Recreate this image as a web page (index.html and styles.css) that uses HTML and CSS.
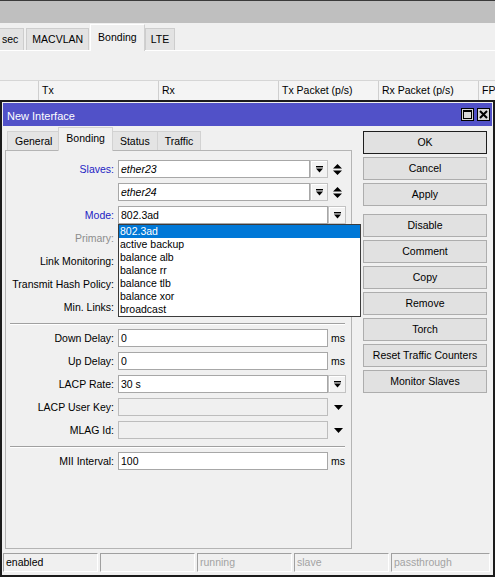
FILE: index.html
```html
<!DOCTYPE html>
<html lang="en">
<head>
  <meta charset="UTF-8" />
  <title>Interface List</title>
  <meta name="viewport" content="width=device-width, initial-scale=1.0" />
  <link rel="stylesheet" href="styles.css">
</head>
<body>

  <div class="top-strip"></div>

  <div class="main-tabs">
    <span class="mtab first">sec</span>
    <span class="mtab">MACVLAN</span>
    <span class="mtab active">Bonding</span>
    <span class="mtab">LTE</span>
  </div>

  <div class="toolbar"></div>

  <div class="list-head">
    <span class="col c0"></span>
    <span class="col c1">Tx</span>
    <span class="col c1">Rx</span>
    <span class="col c2">Tx Packet (p/s)</span>
    <span class="col c2">Rx Packet (p/s)</span>
    <span class="col c3">FP</span>
  </div>

  <div class="window">
    <div class="titlebar">
      <span class="title">New Interface</span>
      <span class="tb-btns">
        <span class="tb-btn">
          <svg width="9" height="9" viewBox="0 0 9 9"><rect x="0.5" y="0.5" width="8" height="8" fill="none" stroke="#000"/><rect x="0" y="0" width="9" height="2" fill="#000"/></svg>
        </span>
        <span class="tb-btn">
          <svg width="9" height="9" viewBox="0 0 9 9"><path d="M1 1L8 8M8 1L1 8" stroke="#000" stroke-width="2"/></svg>
        </span>
      </span>
    </div>

    <div class="win-body">
      <div class="tabs-area">
        <div class="tabs">
          <span class="tab">General</span>
          <span class="tab active">Bonding</span>
          <span class="tab">Status</span>
          <span class="tab">Traffic</span>
        </div>

        <div class="panel">
          <div class="row">
            <span class="lbl link">Slaves:</span>
            <span class="field short"><span class="val it">ether23</span></span>
            <span class="dd-btn"><svg width="7" height="7" viewBox="0 0 7 7"><rect x="0" y="0" width="7" height="1.4"/><path d="M0 2.6H7L3.5 6.6Z"/></svg></span>
            <span class="updown"><svg width="9" height="11" viewBox="0 0 9 11"><path d="M4.5 0L9 4.5H0ZM0 6.5H9L4.5 11Z"/></svg></span>
          </div>
          <div class="row">
            <span class="lbl"></span>
            <span class="field short"><span class="val it">ether24</span></span>
            <span class="dd-btn"><svg width="7" height="7" viewBox="0 0 7 7"><rect x="0" y="0" width="7" height="1.4"/><path d="M0 2.6H7L3.5 6.6Z"/></svg></span>
            <span class="updown"><svg width="9" height="11" viewBox="0 0 9 11"><path d="M4.5 0L9 4.5H0ZM0 6.5H9L4.5 11Z"/></svg></span>
          </div>
          <div class="row">
            <span class="lbl link">Mode:</span>
            <span class="field long has-list">
              <span class="val">802.3ad</span>
              <ul class="droplist">
                <li class="sel">802.3ad</li>
                <li>active backup</li>
                <li>balance alb</li>
                <li>balance rr</li>
                <li>balance tlb</li>
                <li>balance xor</li>
                <li>broadcast</li>
              </ul>
            </span>
            <span class="dd-btn"><svg width="7" height="7" viewBox="0 0 7 7"><rect x="0" y="0" width="7" height="1.4"/><path d="M0 2.6H7L3.5 6.6Z"/></svg></span>
          </div>
          <div class="row"><span class="lbl off">Primary:</span></div>
          <div class="row"><span class="lbl">Link Monitoring:</span></div>
          <div class="row"><span class="lbl">Transmit Hash Policy:</span></div>
          <div class="row"><span class="lbl">Min. Links:</span></div>

          <div class="sep"></div>

          <div class="row">
            <span class="lbl">Down Delay:</span>
            <span class="field long"><span class="val">0</span></span>
            <span class="unit">ms</span>
          </div>
          <div class="row">
            <span class="lbl">Up Delay:</span>
            <span class="field long"><span class="val">0</span></span>
            <span class="unit">ms</span>
          </div>
          <div class="row">
            <span class="lbl">LACP Rate:</span>
            <span class="field long"><span class="val">30 s</span></span>
            <span class="dd-btn"><svg width="7" height="7" viewBox="0 0 7 7"><rect x="0" y="0" width="7" height="1.4"/><path d="M0 2.6H7L3.5 6.6Z"/></svg></span>
          </div>
          <div class="row">
            <span class="lbl">LACP User Key:</span>
            <span class="field long disabled"></span>
            <span class="arrow"><svg width="9" height="5" viewBox="0 0 9 5"><path d="M0 0H9L4.5 5Z"/></svg></span>
          </div>
          <div class="row">
            <span class="lbl">MLAG Id:</span>
            <span class="field long disabled"></span>
            <span class="arrow"><svg width="9" height="5" viewBox="0 0 9 5"><path d="M0 0H9L4.5 5Z"/></svg></span>
          </div>

          <div class="sep"></div>

          <div class="row">
            <span class="lbl">MII Interval:</span>
            <span class="field long"><span class="val">100</span></span>
            <span class="unit">ms</span>
          </div>
        </div>
      </div>

      <div class="buttons">
        <span class="btn default">OK</span>
        <span class="btn">Cancel</span>
        <span class="btn">Apply</span>
        <span class="btn spaced">Disable</span>
        <span class="btn">Comment</span>
        <span class="btn">Copy</span>
        <span class="btn">Remove</span>
        <span class="btn">Torch</span>
        <span class="btn">Reset Traffic Counters</span>
        <span class="btn">Monitor Slaves</span>
      </div>
    </div>

    <div class="statusbar">
      <span class="cell">enabled</span>
      <span class="cell"></span>
      <span class="cell dim">running</span>
      <span class="cell dim">slave</span>
      <span class="cell dim last">passthrough</span>
    </div>
  </div>

</body>
</html>
```

FILE: styles.css
```css
* {
  box-sizing: border-box;
}

body {
  margin: 0;
  width: 495px;
  height: 577px;
  overflow: hidden;
  background: #f0f0f0;
  font-family: "Liberation Sans", Arial, sans-serif;
  font-size: 10.5px;
  color: #000;
}

/* app chrome behind the dialog */
.top-strip {
  height: 23px;
  background: #bfbfbf;
  border-top: 1px solid #3a3a3a;
}

.main-tabs {
  height: 28px;
  display: flex;
  align-items: flex-end;
  margin-left: -7px;
  border-bottom: 1px solid #fff;
}

.mtab {
  height: 22px;
  line-height: 21px;
  padding: 0 5px;
  background: #e3e3e3;
  border: 1px solid #cdcdcd;
  border-bottom: none;
  margin-right: 2px;
}

.mtab.first {
  padding-left: 8px;
}

.mtab.active {
  height: 27px;
  line-height: 24px;
  padding: 0 7px;
  margin: 0 0 -1px -1px;
  background: #f0f0f0;
  border-color: #fff #d0d0d0 #f0f0f0 #fff;
  position: relative;
}

.toolbar {
  height: 29px;
}

.list-head {
  height: 20px;
  display: flex;
  border-top: 1px solid #d6d6d6;
  background: #f4f4f4;
}

.col {
  flex-shrink: 0;
  line-height: 19px;
  padding-left: 3px;
  border-right: 1px solid #cfcfcf;
  white-space: nowrap;
}

.c0 { width: 39px; }
.c1 { width: 120px; }
.c2 { width: 100px; }
.c3 { width: 30px; border-right: none; }

/* dialog window */
.window {
  height: 477px;
  border: 2px solid #1b1b1b;
  padding: 1px;
  background: #f0f0f0;
  display: flex;
  flex-direction: column;
}

.titlebar {
  height: 23px;
  background: #5151c8;
  color: #fff;
  font-size: 11px;
  display: flex;
  align-items: center;
  justify-content: space-between;
  padding: 2px 2px 0 4px;
}

.tb-btns {
  display: flex;
  gap: 3px;
  margin-top: -2px;
}

.tb-btn {
  width: 13px;
  height: 13px;
  border: 1px solid #000;
  background: #d8d8d8;
  display: flex;
  align-items: center;
  justify-content: center;
}

.win-body {
  display: flex;
  padding: 1px 0 0 2px;
}

.tabs-area {
  width: 347px;
}

.tabs {
  height: 23px;
  display: flex;
  align-items: flex-end;
  padding-left: 2px;
}

.tab {
  height: 19px;
  line-height: 18px;
  padding: 0 7px;
  background: #e4e4e4;
  border: 1px solid #d2d2d2;
  border-bottom: none;
  margin-right: -1px;
}

.tab.active {
  height: 24px;
  line-height: 20px;
  padding: 0 7px;
  margin: 0 -1px -1px -1px;
  background: #f0f0f0;
  border-color: #d2d2d2;
  position: relative;
  z-index: 1;
}

.panel {
  height: 399px;
  border: 1px solid #b4b4b4;
  padding-top: 9px;
  display: flex;
  flex-direction: column;
  position: relative;
}

.row {
  display: flex;
  align-items: center;
  flex-shrink: 0;
  height: 18px;
  margin-bottom: 5px;
}

.lbl {
  width: 109px;
  text-align: right;
  padding-right: 1px;
  margin-right: 3px;
  white-space: nowrap;
  line-height: 18px;
}

.lbl.link { color: #2323c4; }
.lbl.off { color: #8d8d8d; }

.field {
  height: 18px;
  background: #fff;
  border: 1px solid #a7a7a7;
  display: flex;
  align-items: center;
  padding-left: 2px;
}

.field.short { width: 192px; }
.field.long { width: 210px; }

.field.disabled {
  background: #f0f0f0;
  border-color: #bdbdbd;
}

.val.it { font-style: italic; }

.dd-btn {
  width: 18px;
  height: 18px;
  border: 1px solid #c3c3c3;
  background: #f3f3f3;
  box-shadow: inset 1px 1px 0 #fff;
  display: flex;
  align-items: center;
  justify-content: center;
}

.updown {
  margin-left: 5px;
  display: flex;
}

.arrow {
  margin-left: 6px;
  display: flex;
}

.unit {
  margin-left: 3px;
}

.sep {
  flex-shrink: 0;
  margin: 2px 6px 4px 4px;
  border-top: 1px solid #a0a0a0;
  border-bottom: 1px solid #fff;
}

/* open combo list of the Mode field */
.has-list {
  position: relative;
}

.droplist {
  position: absolute;
  left: -1px;
  top: 17px;
  width: 243px;
  margin: 0;
  padding: 0;
  list-style: none;
  background: #fff;
  border: 1px solid #3c3c3c;
  z-index: 5;
}

.droplist li {
  height: 13px;
  line-height: 13px;
  padding-left: 1px;
  white-space: nowrap;
}

.droplist li.sel {
  background: #0078d7;
  color: #fff;
}

/* action buttons */
.buttons {
  width: 124px;
  margin-left: 11px;
  padding-top: 4px;
  display: flex;
  flex-direction: column;
  gap: 3px;
}

.btn {
  height: 23px;
  line-height: 21px;
  text-align: center;
  background: #e1e1e1;
  border: 1px solid #adadad;
  white-space: nowrap;
}

.btn.default {
  border-color: #1e1e1e;
}

.btn.spaced {
  margin-top: 5px;
}

.statusbar {
  display: flex;
  gap: 2px;
  margin-top: 4px;
  margin-right: 2px;
  height: 19px;
}

.cell {
  width: 95px;
  line-height: 17px;
  padding-left: 2px;
  border: 1px solid;
  border-color: #a0a0a0 #fff #fff #a0a0a0;
}

.cell.dim { color: #a3a3a3; }
.cell.last { flex: 1; }
```
